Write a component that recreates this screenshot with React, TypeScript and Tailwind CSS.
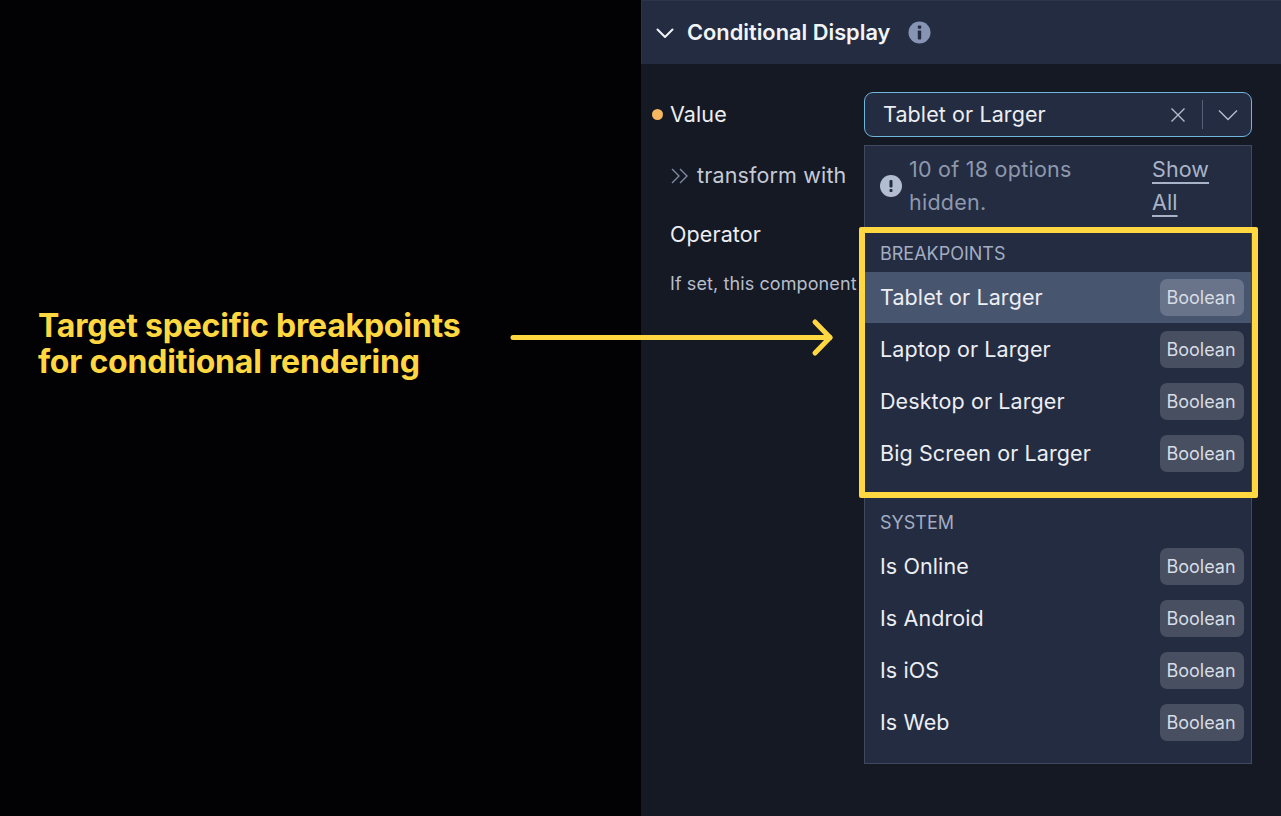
import React from "react";

const breakpoints = ["Tablet or Larger", "Laptop or Larger", "Desktop or Larger", "Big Screen or Larger"];
const system = ["Is Online", "Is Android", "Is iOS", "Is Web"];

function Option({ label, active }: { label: string; active?: boolean }) {
  return (
    <div className={"flex items-center justify-between pl-[15px] pr-[7px] " + (active ? "h-[51px] bg-[#48556f]" : "h-[52px]")}>
      <span className="text-[21.5px] tracking-[0.1px] text-[#eceef3]">{label}</span>
      <span
        className={
          "flex h-[37px] w-[84px] items-center justify-center rounded-[7px] pr-[2px] text-[18px] text-[#d8dce4] " +
          (active ? "bg-[#697389]" : "bg-[#474f60]")
        }
      >
        Boolean
      </span>
    </div>
  );
}

function GroupLabel({ children }: { children: React.ReactNode }) {
  return <div className="pl-[15px] text-[18px] leading-[24px] text-[#a3adc2]">{children}</div>;
}

export default function App() {
  return (
    <div className="relative flex h-[816px] w-[1281px] overflow-hidden bg-[#020204] font-['Inter',sans-serif]">
      <div className="flex w-[641px] shrink-0 flex-col pl-[38px] pt-[308px] text-[32px] font-bold leading-[36px] tracking-[-0.2px] text-[#ffd740]">
        <div>Target specific breakpoints</div>
        <div>for conditional rendering</div>
      </div>

      <div className="flex flex-1 flex-col bg-[#151924]">
        <div className="flex h-[64px] items-center border-l border-t border-[#2d3548] bg-[#232c41] pl-[14px]">
          <svg width="18" height="18" viewBox="0 0 18 18" fill="none" stroke="#f2f4f8" strokeWidth="2" strokeLinecap="round" strokeLinejoin="round">
            <path d="M1.5 5.5 9 13 16.5 5.5" />
          </svg>
          <span className="ml-[13px] text-[21.8px] font-semibold text-[#f2f4f8]">Conditional Display</span>
          <svg className="ml-[18px]" width="23" height="23" viewBox="0 0 23 23">
            <circle cx="11.5" cy="11.5" r="11" fill="#8794b4" />
            <rect x="9.8" y="4.5" width="3.4" height="3.2" rx="1" fill="#232c41" />
            <rect x="9.8" y="9.5" width="3.4" height="9" rx="0.8" fill="#232c41" />
          </svg>
        </div>

        <div className="flex pt-[28px]">
          <div className="w-[223px] shrink-0 pl-[11px]">
            <div className="flex h-[45px] items-center">
              <span className="h-[11px] w-[11px] rounded-full bg-[#f6b860]" />
              <span className="ml-[7px] text-[21.5px] tracking-[0.1px] text-[#eceef3]">Value</span>
            </div>
            <div className="mt-[16px] flex h-[45px] items-center pl-[18px]">
              <svg width="20" height="18" viewBox="0 0 20 18" fill="none" stroke="#7f8aa3" strokeWidth="1.4">
                <path d="M2 2 9 9 2 16M10 2 17 9 10 16" />
              </svg>
              <span className="ml-[7px] whitespace-nowrap text-[21.5px] tracking-[0.15px] text-[#c5cad6]">transform with</span>
            </div>
            <div className="mt-[14px] flex h-[45px] items-center pl-[18px] text-[21.5px] tracking-[0.1px] text-[#eceef3]">Operator</div>
            <div className="mt-[13px] whitespace-nowrap pl-[18px] text-[18px] leading-[28px] tracking-[0.1px] text-[#b7bdca]">If set, this component</div>
          </div>

          <div className="relative h-[45px] w-[388px] shrink-0">
            <div className="flex h-[45px] items-center rounded-[9px] border border-[#6fb5dc] bg-[#232c41] pl-[18px] pr-[13px]">
              <span className="flex-1 text-[21.5px] tracking-[0.1px] text-[#eceef3]">Tablet or Larger</span>
              <svg width="16" height="16" viewBox="0 0 16 16" fill="none" stroke="#b4bccc" strokeWidth="1.4">
                <path d="M1.5 1.5 14.5 14.5M14.5 1.5 1.5 14.5" />
              </svg>
              <span className="ml-[16px] h-[29px] w-px bg-[#566179]" />
              <svg className="ml-[15px]" width="20" height="12" viewBox="0 0 20 12" fill="none" stroke="#b4bccc" strokeWidth="1.4">
                <path d="M1 1.5 10 10.5 19 1.5" />
              </svg>
            </div>

            <div className="absolute left-0 top-[53px] h-[619px] w-[388px] border border-[#3f4a61] bg-[#232c41]">
              <div className="flex h-[79px] items-center pl-[15px] text-[21.5px] leading-[33px] tracking-[0.25px] text-[#8e98ad]">
                <svg width="22" height="22" viewBox="0 0 22 22" className="shrink-0">
                  <circle cx="11" cy="11" r="11" fill="#b3bdd2" />
                  <rect x="9.5" y="5" width="3" height="7.5" rx="1" fill="#232c41" />
                  <rect x="9.5" y="14" width="3" height="3" rx="1" fill="#232c41" />
                </svg>
                <span className="ml-[7px] w-[243px] shrink-0 pr-[60px]">10 of 18 options hidden.</span>
                <span className="w-[60px] tracking-[0.1px] text-[#a9b3c7] underline underline-offset-[5px]">Show All</span>
              </div>
              <div className="pt-[17px]">
                <GroupLabel>BREAKPOINTS</GroupLabel>
                <div className="mt-[6px]">
                  {breakpoints.map((label, i) => (
                    <Option key={label} label={label} active={i === 0} />
                  ))}
                </div>
              </div>
              <div className="pt-[32px]">
                <GroupLabel>SYSTEM</GroupLabel>
                <div className="mt-[5px]">
                  {system.map((label) => (
                    <Option key={label} label={label} />
                  ))}
                </div>
              </div>
            </div>
          </div>
        </div>
      </div>

      {/* annotation overlays */}
      <div className="absolute left-[859px] top-[227px] h-[271px] w-[399px] rounded-[2px] border-[6px] border-[#ffd740]" />
      <svg className="absolute left-[505px] top-[315px]" width="335" height="46" viewBox="0 0 335 46" fill="none" stroke="#ffd740" strokeWidth="5" strokeLinecap="round" strokeLinejoin="round">
        <path d="M8 22.5H325" />
        <path d="M310 7 325 22.5 310 38" />
      </svg>
    </div>
  );
}
